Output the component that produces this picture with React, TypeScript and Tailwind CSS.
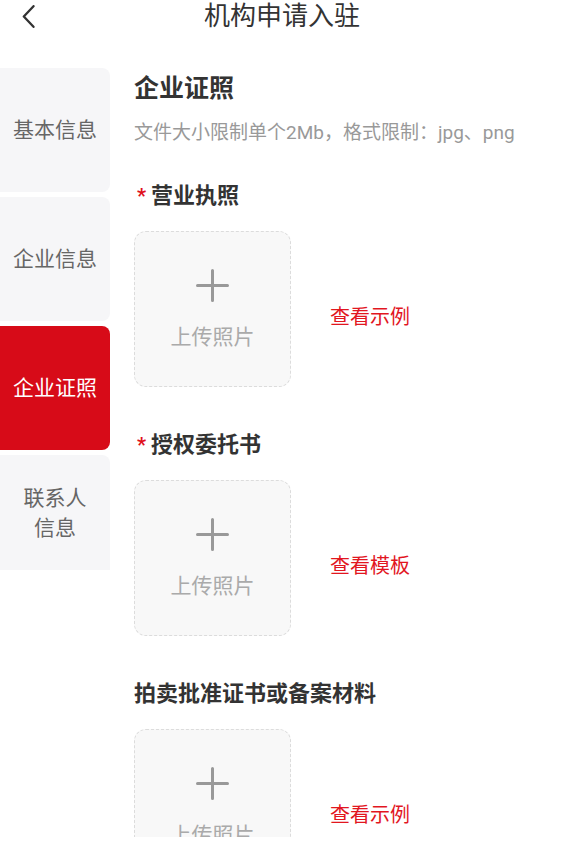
const NAV = [
  { key: 'basic', lines: ['基本信息'] },
  { key: 'company', lines: ['企业信息'] },
  { key: 'license', lines: ['企业证照'] },
  { key: 'contact', lines: ['联系人', '信息'] },
]

const UPLOADS = [
  { label: '营业执照', required: true, link: '查看示例' },
  { label: '授权委托书', required: true, link: '查看模板' },
  { label: '拍卖批准证书或备案材料', required: false, link: '查看示例' },
]

export default function App() {
  const active = 'license'

  return (
    <div className="h-[856px] overflow-hidden bg-white font-['Roboto','Noto_Sans_CJK_SC',sans-serif] text-[#333]">
      {/* nav bar */}
      <header className="relative h-[31px] flex items-center justify-center">
        <button className="absolute left-[22px] top-[5px] text-[#333]">
          <svg width="13" height="23" viewBox="0 0 13 23" fill="none">
            <path d="M11.5 1.2L1.8 11.5l9.7 10.3" stroke="currentColor" strokeWidth="2.3" strokeLinecap="round" strokeLinejoin="round" />
          </svg>
        </button>
        <h1 className="text-[26px] leading-none text-[#333]">机构申请入驻</h1>
      </header>

      <div className="flex h-[806px] overflow-hidden pt-[37px]">
        {/* side steps */}
        <nav className="w-[110px] shrink-0 flex flex-col gap-[5px]">
          {NAV.map((n, i) => (
            <div
              key={n.key}
              className={`flex flex-col items-center justify-center text-[21px] leading-[30px] ${
                i === NAV.length - 1 ? 'h-[115px] rounded-tr-lg' : 'h-[124px] rounded-r-lg'
              } ${n.key === active ? 'bg-[#d70b18] text-white' : 'bg-[#f6f6f8] text-[#666]'}`}
            >
              {n.lines.map((l) => (
                <span key={l}>{l}</span>
              ))}
            </div>
          ))}
        </nav>

        {/* form */}
        <main className="flex-1 pl-[24px] pr-4">
          <h2 className="text-[25px] font-bold leading-none mt-[8px]">企业证照</h2>
          <p className="mt-[22px] text-[19px] leading-none text-[#999]">
            文件大小限制单个2Mb，格式限制：jpg、png
          </p>

          <div className="flex flex-col gap-[47px] mt-[43px]">
            {UPLOADS.map((u) => (
              <section key={u.label}>
                <div className="flex items-start text-[22px] font-bold leading-none text-[#333]">
                  {u.required && (
                    <span className="text-[#e0101c] text-[20px] ml-[3px] mr-[5px] mt-[1px]">*</span>
                  )}
                  <span>{u.label}</span>
                </div>
                <div className="flex items-center mt-[24px]">
                  <button className="w-[157px] h-[156px] rounded-[12px] border-[1.5px] border-dashed border-[#dcdcdc] bg-[#f8f8f8] flex flex-col items-center justify-center">
                    <svg width="33" height="33" viewBox="0 0 33 33" className="mt-[-2px]">
                      <path d="M16.5 1.5v30M1.5 16.5h30" stroke="#999" strokeWidth="3" strokeLinecap="round" />
                    </svg>
                    <span className="mt-[25px] text-[21px] leading-none text-[#aaa]">上传照片</span>
                  </button>
                  <a className="ml-[39px] mt-[15px] text-[20px] leading-none text-[#e2161f]">{u.link}</a>
                </div>
              </section>
            ))}
          </div>
        </main>
      </div>
    </div>
  )
}
